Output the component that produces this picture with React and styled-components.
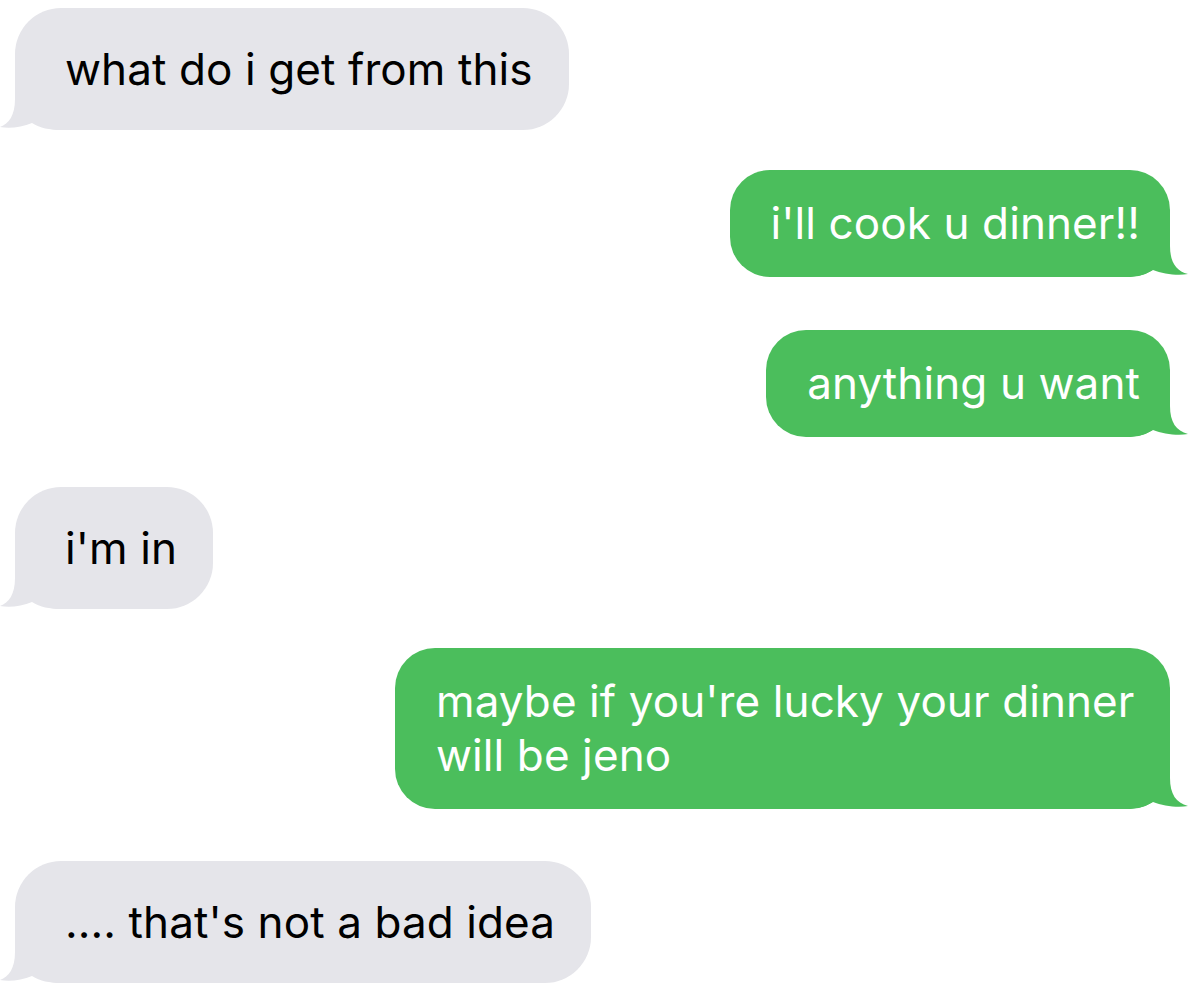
import styled, { createGlobalStyle } from 'styled-components'

const GRAY = '#e5e5ea'
const GREEN = '#4bbe5c'

const messages = [
    { from: 'them', text: 'what do i get from this', top: 8 },
    { from: 'me', text: "i'll cook u dinner!!", top: 40 },
    { from: 'me', text: 'anything u want', top: 53 },
    { from: 'them', text: "i'm in", top: 50 },
    { from: 'me', text: "maybe if you're lucky your dinner will be jeno", top: 39 },
    { from: 'them', text: ".... that's not a bad idea", top: 52 },
]

// tail drawn in the bubble colour; r = how far the tip sticks out past the bubble edge
function Tail({ mine }) {
    const r = mine ? 18 : 15
    const d = `M${r} 0 L${r} 14 C${r} 30 ${r - 6} 39 0 42 C10 44 ${r + 7} 42 ${r + 17} 38 C${r + 25} 43 ${r + 35} 45 ${r + 45} 45 L${r + 45} 0 Z`
    return (
        <TailMark mine={mine} r={r} viewBox={`0 0 ${r + 45} 45`} width={r + 45} height="45">
            <path d={d} fill={mine ? GREEN : GRAY} />
        </TailMark>
    )
}

function App() {
    return (
        <>
            <GlobalStyle />
            <Thread>
                {messages.map((m, i) => (
                    <Row key={i} mine={m.from === 'me'} top={m.top}>
                        <Bubble mine={m.from === 'me'}>
                            <Text>{m.text}</Text>
                            <Tail mine={m.from === 'me'} />
                        </Bubble>
                    </Row>
                ))}
            </Thread>
        </>
    )
}

const GlobalStyle = createGlobalStyle`
    html, body {
        margin: 0;
        padding: 0;
        background: #ffffff;
    }
    body {
        font-family: Inter, "Liberation Sans", Arial, sans-serif;
    }
`

const Thread = styled.div`
    display: flex;
    flex-direction: column;
    padding: 0 30px 10px 15px;
    width: 1200px;
    box-sizing: border-box;
`

const Row = styled.div`
    display: flex;
    justify-content: ${p => (p.mine ? 'flex-end' : 'flex-start')};
    margin-top: ${p => p.top}px;
`

const Bubble = styled.div`
    position: relative;
    box-sizing: border-box;
    max-width: 775px;
    font-size: 44px;
    line-height: 54px;
    letter-spacing: 0.1px;
    border-radius: ${p => (p.mine ? '40px' : '46px')};
    background: ${p => (p.mine ? GREEN : GRAY)};
    color: ${p => (p.mine ? '#ffffff' : '#000000')};
    padding: ${p => (p.mine ? '26px 30px 27px 41px' : '34px 36px 34px 50px')};
`

const Text = styled.span`
    position: relative;
    z-index: 1;
`

const TailMark = styled.svg`
    position: absolute;
    bottom: 0;
    ${p => (p.mine ? `right: -${p.r}px; transform: scaleX(-1);` : `left: -${p.r}px;`)}
    display: block;
`

export default App
